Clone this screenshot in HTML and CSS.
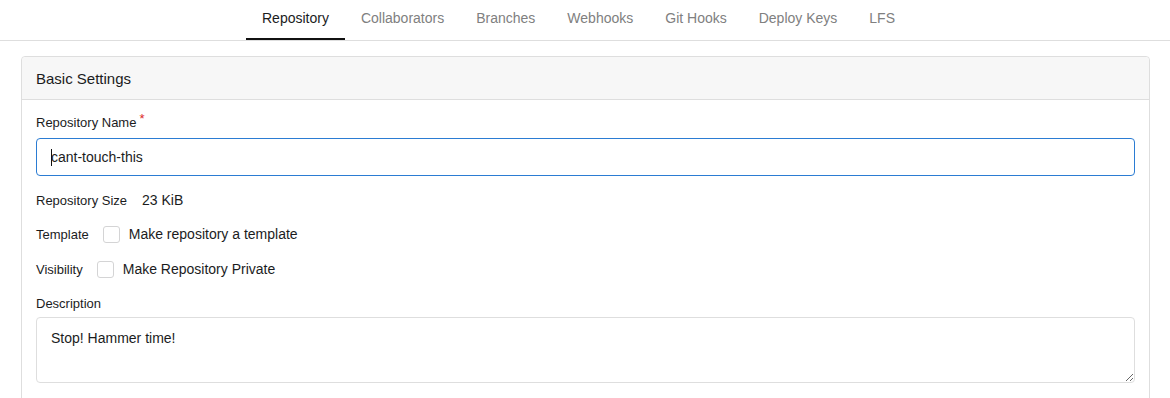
FILE: index.html
```html
<!DOCTYPE html>
<html>
<head>
<meta charset="utf-8">
<link rel="stylesheet" href="styles.css">
</head>
<body>
<nav class="tabs">
  <a class="tab active">Repository</a>
  <a class="tab">Collaborators</a>
  <a class="tab">Branches</a>
  <a class="tab">Webhooks</a>
  <a class="tab">Git Hooks</a>
  <a class="tab">Deploy Keys</a>
  <a class="tab">LFS</a>
</nav>
<main class="page">
  <section class="panel">
    <header class="panel-head">Basic Settings</header>
    <div class="panel-body">
      <label class="field-label">Repository Name<span class="req">*</span></label>
      <div class="input focused"><span class="caret"></span>cant-touch-this</div>
      <div class="row size-row"><span class="row-label">Repository Size</span><span class="value">23 KiB</span></div>
      <div class="row tpl-row"><span class="row-label">Template</span><span class="check"></span><span class="value">Make repository a template</span></div>
      <div class="row vis-row"><span class="row-label">Visibility</span><span class="check"></span><span class="value">Make Repository Private</span></div>
      <label class="field-label desc-label">Description</label>
      <textarea class="textarea">Stop! Hammer time!</textarea>
    </div>
  </section>
</main>
</body>
</html>
```
FILE: styles.css
```css
* { box-sizing: border-box; }
html, body { margin: 0; padding: 0; background: #fff; overflow: hidden; }
body {
  font-family: "Liberation Sans", Arial, sans-serif;
  color: #1f2328;
  width: 1170px;
  height: 398px;
}
.tabs {
  display: flex;
  justify-content: center;
  height: 41px;
  border-bottom: 1px solid #dedede;
  padding-right: 13px;
}
.tab {
  display: flex;
  align-items: center;
  padding: 0 16px 2px;
  height: 40px;
  font-size: 14px;
  color: #808080;
  border-bottom: 2px solid transparent;
}
.tab.active {
  color: #1b1c1d;
  border-bottom-color: #111;
}
.page {
  padding: 15px 20px 0 21px;
}
.panel {
  border: 1px solid #dedede;
  border-radius: 4px 4px 0 0;
  height: 360px;
}
.panel-head {
  background: #f7f7f7;
  height: 43px;
  border-bottom: 1px solid #dedede;
  border-radius: 4px 4px 0 0;
  font-size: 15px;
  display: flex;
  align-items: center;
  padding: 0 14px;
  color: #1b1c1d;
}
.panel-body {
  display: flex;
  flex-direction: column;
  padding: 15px 14px 0 14px;
}
.field-label {
  font-size: 13px;
  line-height: 16px;
  height: 16px;
  margin-bottom: 7px;
  position: relative;
  color: #1b1c1d;
}
.req {
  color: #db2828;
  font-size: 13px;
  position: relative;
  top: -4px;
  margin-left: 3px;
}
.input {
  height: 38px;
  border: 1px solid #2b7cd3;
  border-radius: 4px;
  display: flex;
  align-items: center;
  padding: 0 14px;
  font-size: 14px;
  color: #1b1c1d;
  position: relative;
}
.caret {
  position: absolute;
  left: 14px;
  top: 10px;
  width: 1px;
  height: 17px;
  background: #111;
}
.row {
  display: flex;
  align-items: center;
  height: 20px;
}
.row-label { font-size: 13px; color: #1b1c1d; }
.value { font-size: 14px; color: #1b1c1d; }
.size-row { margin-top: 14px; }
.size-row .row-label { margin-right: 15px; }
.tpl-row { margin-top: 14px; }
.tpl-row .row-label { margin-right: 14px; }
.tpl-row .check { margin-right: 9px; }
.vis-row { margin-top: 15px; }
.vis-row .row-label { margin-right: 14px; }
.check {
  width: 17px;
  height: 17px;
  border: 1px solid #d4d4d5;
  border-radius: 3px;
  background: #fff;
  margin-right: 9px;
}
.desc-label { margin-top: 17px; margin-bottom: 5px; }
.textarea {
  height: 66px;
  width: 100%;
  border: 1px solid #dedede;
  border-radius: 4px;
  padding: 10px 14px;
  font-family: "Liberation Sans", Arial, sans-serif;
  font-size: 14px;
  line-height: 20px;
  color: #1b1c1d;
  resize: vertical;
  margin: 0;
  outline: none;
}
```
